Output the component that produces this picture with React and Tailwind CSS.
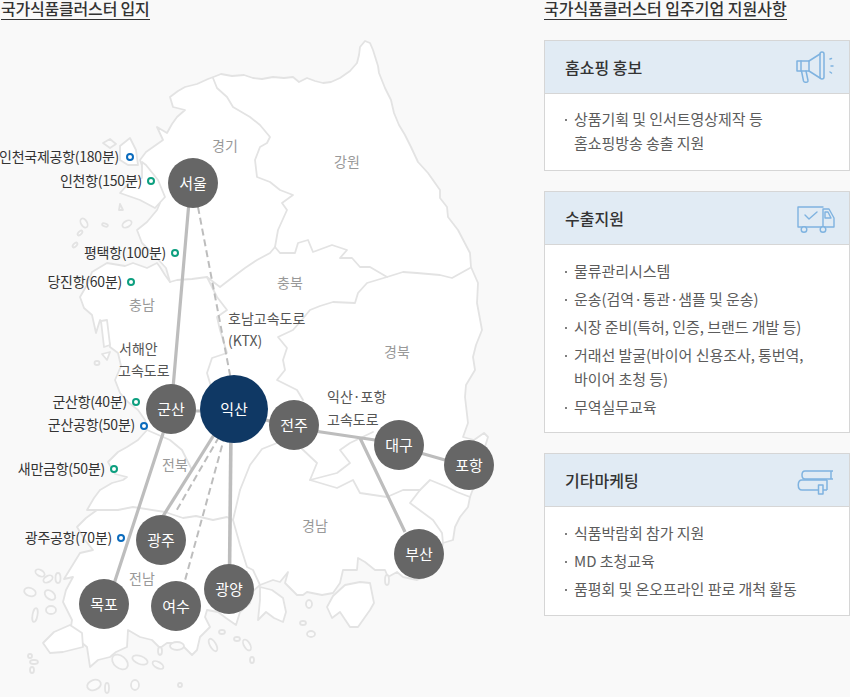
import React from "react";

const KR = { fontFamily: '"Noto Sans CJK KR", "Noto Sans", sans-serif' };

const ports = [
  { t: "인천국제공항(180분)", c: "right-[425px] top-[146px]", d: "left-[126px] top-[153px] border-[#0a6bbd]" },
  { t: "인천항(150분)", c: "right-[402px] top-[170px]", d: "left-[147px] top-[177px] border-[#0c9f7f]" },
  { t: "평택항(100분)", c: "right-[378px] top-[242px]", d: "left-[171px] top-[249px] border-[#0c9f7f]" },
  { t: "당진항(60분)", c: "right-[422px] top-[271px]", d: "left-[127px] top-[278px] border-[#0c9f7f]" },
  { t: "군산항(40분)", c: "right-[417px] top-[391px]", d: "left-[132px] top-[398px] border-[#0c9f7f]" },
  { t: "군산공항(50분)", c: "right-[409px] top-[414px]", d: "left-[140px] top-[422px] border-[#0a6bbd]" },
  { t: "새만금항(50분)", c: "right-[439px] top-[458px]", d: "left-[110px] top-[465px] border-[#0c9f7f]" },
  { t: "광주공항(70분)", c: "right-[432px] top-[527px]", d: "left-[117px] top-[534px] border-[#0a6bbd]" },
];

const regions = [
  ["경기", "left-[212px] top-[135px]"],
  ["강원", "left-[334px] top-[151px]"],
  ["충북", "left-[277px] top-[272px]"],
  ["충남", "left-[129px] top-[294px]"],
  ["경북", "left-[384px] top-[341px]"],
  ["전북", "left-[162px] top-[454px]"],
  ["경남", "left-[302px] top-[515px]"],
  ["전남", "left-[129px] top-[568px]"],
];

const roads = [
  ["호남고속도로", "left-[228px] top-[308px]"],
  ["(KTX)", "left-[228px] top-[330px]"],
  ["서해안", "left-[119px] top-[338px]"],
  ["고속도로", "left-[118px] top-[360px]"],
  ["익산·포항", "left-[327px] top-[386px]"],
  ["고속도로", "left-[327px] top-[409px]"],
];

const cities = [
  ["서울", "left-[168px] top-[158px]"],
  ["군산", "left-[146px] top-[384px]"],
  ["전주", "left-[269px] top-[400px]"],
  ["대구", "left-[374px] top-[420px]"],
  ["포항", "left-[444px] top-[440px]"],
  ["부산", "left-[394px] top-[529px]"],
  ["광주", "left-[136px] top-[515px]"],
  ["목포", "left-[79px] top-[579px]"],
  ["여수", "left-[151px] top-[581px]"],
  ["광양", "left-[204px] top-[564px]"],
];

function KoreaMap() {
  return (
    <svg className="absolute left-0 top-0" width="544" height="697" viewBox="0 0 544 697" fill="none">
      <g stroke="#e3e3e3" strokeWidth="1.8" strokeLinejoin="round" strokeLinecap="round">
        <path
          fill="#ffffff"
          d="M170 97 L178 91 L185 87 L197 84 L208 79 L216 76 L221 74 L232 76 L244 75 L253 78 L262 79 L273 77 L284 78 L293 77 L299 82 L307 78 L315 81 L323 83 L331 82 L340 78 L350 71 L357 63 L359 55 L360 47 L365 41 L370 43 L373 50 L378 66 L379 73 L385 88 L391 100 L394 113 L399 125 L405 135 L411 147 L418 162 L428 173 L440 190 L440 198 L447 207 L448 217 L458 230 L470 253 L471 267 L478 283 L477 303 L482 330 L476 345 L473 357 L475 370 L466 385 L465 397 L468 423 L463 437 L474 440 L484 433 L488 437 L484 450 L480 470 L470 497 L468 507 L460 517 L455 527 L453 540 L443 543 L440 560 L430 575 L417 580 L403 577 L397 572 L388 577 L385 570 L375 570 L365 562 L358 558 L357 570 L343 570 L340 583 L333 593 L322 595 L307 592 L303 595 L297 595 L285 583 L288 572 L280 582 L273 580 L260 585 L252 592 L250 603 L240 612 L236 625 L226 618 L218 612 L207 610 L205 617 L210 627 L200 637 L197 650 L192 655 L180 643 L167 643 L160 648 L152 640 L140 637 L128 630 L127 647 L116 652 L110 657 L98 660 L90 667 L87 647 L70 633 L72 620 L63 602 L66 590 L73 577 L64 579 L72 566 L80 553 L93 550 L85 540 L77 527 L86 518 L97 510 L87 510 L94 498 L100 490 L112 483 L123 480 L127 477 L115 474 L108 462 L118 452 L127 447 L138 440 L147 430 L145 420 L138 410 L128 402 L120 393 L115 380 L121 366 L118 353 L110 347 L108 335 L100 320 L96 333 L92 315 L84 308 L80 297 L87 285 L92 272 L107 263 L125 266 L133 263 L147 268 L157 263 L160 267 L165 275 L170 282 L166 268 L155 256 L142 243 L137 230 L147 222 L157 210 L160 203 L153 195 L147 180 L140 160 L146 152 L163 140 L157 127 L167 133 L172 124 L177 117 L185 110 L173 107 L170 97 Z"
        />
        <path d="M213 78 L217 88 L227 97 L233 107 L250 117 L260 125 L270 137 L267 143 L260 147 L255 160 L257 177 L270 182 L280 190 L293 195 L282 203 L287 210 L278 230 L275 247 L280 253 L295 253 L298 243 L308 240 L313 252 L332 245 L347 250 L340 258 L352 258 L360 267 L370 267 L387 277 L403 272 L417 273 L440 275 L452 278 L470 268" />
        <path d="M170 282 L177 280 L192 279 L207 277 L220 287 L233 277 L245 268 L257 260 L270 253 L275 247" />
        <path d="M207 277 L217 297 L227 310 L217 317 L220 330 L227 353 L212 358 L207 373 L212 390" />
        <path d="M387 277 L367 283 L358 293 L355 303 L333 302 L320 306 L310 310 L300 322 L293 330 L278 337 L287 348 L283 360 L285 370 L277 380 L297 390 L303 400" />
        <path d="M373 432 L350 443 L340 450 L350 463 L337 473 L310 480 L337 488 L353 480 L360 493 L387 497 L403 490 L420 490 L430 480 L447 487 L457 492 L470 497" />
        <path d="M420 490 L410 503 L433 520 L442 533 L443 543" />
        <path d="M240 490 L250 465 L262 449 L277 443 L300 447 L317 463 L310 480" />
        <path d="M240 490 L233 520 L227 517 L213 520 L196 516 L183 518 L165 512 L133 507 L118 510 L97 510" />
        <path d="M233 520 L240 545 L247 567 L253 570 L260 585" />
        <path d="M147 430 L170 440 L182 450 L192 470" />
        <g fill="#fbfbfb">
          <path d="M120 146 L130 138 L136 150 L138 165 L128 165 L120 160 Z" fill="#ffffff" />
          <path d="M103 143 L110 139 L116 144 L110 148 Z" />
          <path d="M142 162 L146 165 L158 180 L165 197 L155 208 L140 200 L120 193 L130 182 L142 178 Z" fill="#ffffff" />
          <path d="M120 204 L123 210 L119 210 Z" />
          <ellipse cx="84" cy="223" rx="3" ry="5" transform="rotate(-30 84 223)" />
          <ellipse cx="105" cy="225" rx="3" ry="1.5" transform="rotate(20 105 225)" />
          <ellipse cx="127" cy="224" rx="5" ry="3" transform="rotate(-30 127 224)" />
          <ellipse cx="80" cy="233" rx="3" ry="1.5" transform="rotate(-45 80 233)" />
          <ellipse cx="75" cy="245" rx="3" ry="1.5" transform="rotate(-45 75 245)" />
          <path d="M101 321 L107 320 L110 345 L104 347 Z" fill="#ffffff" />
          <path d="M102 354 L110 352 L107 360 Z" fill="#ffffff" />
          <ellipse cx="97" cy="363" rx="2.5" ry="2" />
          <path d="M43 643 L54 632 L70 625 L82 633 L83 647 L63 652 L50 653 Z" fill="#ffffff" />
          <ellipse cx="40" cy="573" rx="5" ry="3" transform="rotate(30 40 573)" />
          <ellipse cx="48" cy="579" rx="5" ry="3" transform="rotate(-30 48 579)" />
          <ellipse cx="30" cy="592" rx="6" ry="4" transform="rotate(20 30 592)" />
          <ellipse cx="50" cy="595" rx="6" ry="4" transform="rotate(40 50 595)" />
          <ellipse cx="51" cy="610" rx="5" ry="4" />
          <ellipse cx="35" cy="615" rx="2.5" ry="7" transform="rotate(10 35 615)" />
          <ellipse cx="58" cy="578" rx="2.5" ry="5" />
          <ellipse cx="30" cy="656" rx="2" ry="2" />
          <ellipse cx="34" cy="662" rx="4" ry="2" />
          <ellipse cx="32" cy="670" rx="2" ry="3" />
          <ellipse cx="135" cy="685" rx="4" ry="5" />
          <ellipse cx="94" cy="685" rx="7" ry="5" transform="rotate(-20 94 685)" />
          <ellipse cx="107" cy="688" rx="2" ry="5" />
          <ellipse cx="180" cy="685" rx="2" ry="2" />
          <ellipse cx="120" cy="662" rx="9" ry="6" transform="rotate(40 120 662)" />
          <ellipse cx="140" cy="660" rx="8" ry="4" transform="rotate(20 140 660)" />
          <ellipse cx="158" cy="665" rx="6" ry="3" transform="rotate(30 158 665)" />
          <ellipse cx="160" cy="651" rx="2" ry="4" />
          <ellipse cx="177" cy="646" rx="7" ry="4" />
          <ellipse cx="213" cy="645" rx="3" ry="7" transform="rotate(-30 213 645)" />
          <ellipse cx="222" cy="632" rx="3" ry="2" />
          <ellipse cx="237" cy="639" rx="3" ry="2" />
          <ellipse cx="247" cy="645" rx="3" ry="6" transform="rotate(-30 247 645)" />
          <ellipse cx="252" cy="660" rx="2" ry="3" />
          <path d="M260 587 L272 590 L283 598 L286 612 L283 622 L274 618 L266 612 L258 620 L260 600 Z" fill="#ffffff" />
          <ellipse cx="309" cy="604" rx="3" ry="4" />
          <ellipse cx="303" cy="623" rx="3" ry="2" />
          <ellipse cx="311" cy="634" rx="4" ry="3" />
          <path d="M333 596 L345 585 L360 582 L370 583 L374 603 L370 610 L358 627 L350 627 L340 612 L332 618 L327 607 Z" fill="#ffffff" />
          <ellipse cx="387" cy="580" rx="2" ry="5" />
        </g>
      </g>
      <g stroke="#bdbdbd">
        <path d="M190 190 L172 400 M171 409 L112 590" strokeWidth="3.2" />
        <path d="M171 411 L234 411 M234 411 L294 428 M294 428 L375 440 L445 460 M360 438 L405 532" strokeWidth="3.2" />
        <path d="M217 430 L160 521" strokeWidth="3.2" />
        <path d="M231 430 L229.500 575" strokeWidth="3.6" />
        <path d="M198 207 L231 380 M219 437 L175 513 M225 435 L184 584" strokeWidth="2" strokeDasharray="7 4" />
      </g>
    </svg>
  );
}

function Dot({ c }) {
  return <span className={`absolute h-2 w-2 rounded-full border-2 bg-white ${c}`} />;
}

function Megaphone() {
  return (
    <svg width="40" height="32" viewBox="0 0 40 32" fill="none" stroke="#7fb3e0" strokeWidth="1.5" strokeLinejoin="round" strokeLinecap="round">
      <rect x="2" y="10" width="12" height="10" />
      <path d="M6 10 V20" />
      <path d="M14 10 L25 3 M14 20 L25 27" />
      <rect x="25" y="1" width="4" height="27" rx="2" />
      <path d="M6.500 20 L8.500 30 C9.500 32 13.500 31.500 13 29.500 L11 20" />
      <path d="M35 8 L36.500 7.500 M36 15 H38 M35 21 L36.500 22" />
    </svg>
  );
}

function Truck() {
  return (
    <svg width="40" height="32" viewBox="0 0 40 32" fill="none" stroke="#7fb3e0" strokeWidth="1.4" strokeLinejoin="round" strokeLinecap="round">
      <path d="M28 5 H3 V25 H39 V16 L34 7 H28 V25" />
      <path d="M30 10 V16 H36 L33 10 Z" />
      <path d="M10 13 L14 17 L22 10" />
      <circle cx="9" cy="27.500" r="2.800" fill="#e1ebf4" />
      <circle cx="28" cy="27.500" r="2.800" fill="#e1ebf4" />
    </svg>
  );
}

function Books() {
  return (
    <svg width="40" height="32" viewBox="0 0 40 32" fill="none" stroke="#7fb3e0" strokeWidth="1.5" strokeLinejoin="round">
      <path d="M38 7 H10 C6 7 6 15 10 15 H38" />
      <path d="M36 7 V15" />
      <path d="M32 16 H7 C2 16 2 26 7 26 H32" />
      <path d="M32 16 V26" />
      <rect x="23.500" y="21" width="4.500" height="9" fill="#e1ebf4" />
    </svg>
  );
}

function Card({ title, icon, pad, children }) {
  return (
    <section className="border border-[#d6d6d6] bg-white">
      <header className="flex h-[53px] items-center justify-between border-b border-[#d6d6d6] bg-[#e1ebf4] pl-5 pr-[14px]">
        <h3 className="text-[16px] font-medium text-[#333333]">{title}</h3>
        {icon}
      </header>
      <ul className={`px-5 text-[15px] leading-[24px] tracking-[-0.05px] text-[#5c5c5c] ${pad}`}>{children}</ul>
    </section>
  );
}

function Li({ children }) {
  return (
    <li className="mb-1 flex last:mb-0">
      <span className="mt-[12px] mr-[7px] h-[2px] w-[2px] shrink-0 rounded-full bg-[#555555]" />
      <span>{children}</span>
    </li>
  );
}

export default function App() {
  return (
    <div className="flex h-[697px] w-[850px] bg-[#f9f9f9]" style={KR}>
      <div className="relative h-[697px] w-[544px] shrink-0">
        <h2 className="ml-px h-5 w-fit border-b border-[#333333] text-[16px] font-medium leading-[17px] tracking-[-0.2px] text-[#333333]">
          국가식품클러스터 입지
        </h2>
        <KoreaMap />
        {regions.map(([t, c]) => (
          <span key={t} className={`absolute text-[14px] leading-5 text-[#999999] ${c}`}>{t}</span>
        ))}
        {roads.map(([t, c], i) => (
          <span key={i} className={`absolute whitespace-nowrap text-[14px] leading-5 text-[#555555] ${c}`}>{t}</span>
        ))}
        {ports.map((p) => (
          <React.Fragment key={p.t}>
            <span className={`absolute whitespace-nowrap text-[14px] leading-5 tracking-[-0.25px] text-[#333333] ${p.c}`}>{p.t}</span>
            <Dot c={p.d} />
          </React.Fragment>
        ))}
        {cities.map(([t, c]) => (
          <span key={t} className={`absolute flex h-[50px] w-[50px] items-center justify-center rounded-full bg-[#666666] text-[15px] text-white ${c}`}>{t}</span>
        ))}
        <span className="absolute left-[200px] top-[375px] flex h-[68px] w-[68px] items-center justify-center rounded-full bg-[#0f3864] text-[15px] text-white">익산</span>
      </div>
      <div className="w-[306px]">
        <h2 className="h-5 w-fit border-b border-[#333333] text-[16px] font-medium leading-[17px] text-[#333333]">
          국가식품클러스터 입주기업 지원사항
        </h2>
        <div className="mt-5 flex flex-col gap-[20px]">
          <Card title="홈쇼핑 홍보" icon={<Megaphone />} pad="pt-[13px] pb-[15px]">
            <Li>상품기획 및 인서트영상제작 등<br />홈쇼핑방송 송출 지원</Li>
          </Card>
          <Card title="수출지원" icon={<Truck />} pad="pt-[14px] pb-[13px]">
            <Li>물류관리시스템</Li>
            <Li>운송(검역·통관·샘플 및 운송)</Li>
            <Li>시장 준비(특허, 인증, 브랜드 개발 등)</Li>
            <Li>거래선 발굴(바이어 신용조사, 통번역,<br />바이어 초청 등)</Li>
            <Li>무역실무교육</Li>
          </Card>
          <Card title="기타마케팅" icon={<Books />} pad="pt-[14px] pb-[14px]">
            <Li>식품박람회 참가 지원</Li>
            <Li>MD 초청교육</Li>
            <Li>품평회 및 온오프라인 판로 개척 활동</Li>
          </Card>
        </div>
      </div>
    </div>
  );
}
